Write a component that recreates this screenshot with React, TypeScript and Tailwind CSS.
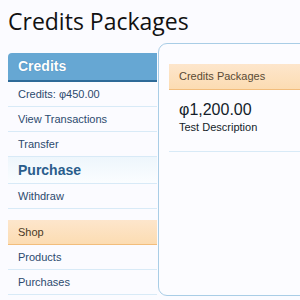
export default function App() {
    const rowCls =
        "h-[25px] flex items-center pl-[10px] border-b border-[#d8eaf7] text-[11px] text-[#2c4a6e]";

    return (
        <div
            className="w-[300px] h-[300px] overflow-hidden bg-[#fbfbff]"
            style={{ fontFamily: '"Liberation Sans", Arial, sans-serif' }}
        >
            <h1
                className="pl-[8px] pt-[6px] h-[43px] text-[23px] leading-[30px] text-[#111]"
                style={{ fontFamily: '"Open Sans", sans-serif' }}
            >
                Credits Packages
            </h1>
            <div className="flex">
                <div className="ml-[8px] mt-[10px] w-[149px] shrink-0">
                    <div className="h-[29px] flex items-center pl-[10px] bg-[#66a7d3] rounded-tl-[4px] border-b-2 border-[#2e6a98] text-[14px] font-bold text-white [text-shadow:0_0_1px_#3d7bab]">
                        Credits
                    </div>
                    <div className={rowCls + " text-[#1e2a38]"}>Credits: φ450.00</div>
                    <div className={rowCls}>View Transactions</div>
                    <div className={rowCls}>Transfer</div>
                    <div className="h-[27px] flex items-center pl-[10px] border-b border-[#d8eaf7] bg-gradient-to-b from-[#eef6fc] to-[#fbfdff] text-[14px] font-bold text-[#2a5d8c]">
                        Purchase
                    </div>
                    <div className={rowCls}>Withdraw</div>
                    <div className="h-[11px]" />
                    <div className="h-[25px] flex items-center pl-[10px] bg-gradient-to-b from-[#fde6cc] to-[#fcdcb2] border-b border-[#f2bd7c] text-[11px] text-[#4a3a26]">
                        Shop
                    </div>
                    <div className={rowCls}>Products</div>
                    <div className={rowCls}>Purchases</div>
                </div>
                <div className="ml-[1px] w-[200px] h-[253px] shrink-0 border border-[#a9cde6] rounded-[9px] bg-[#fcfcff] pl-[10px] pt-[20px]">
                    <div className="h-[26px] flex items-center pl-[10px] bg-gradient-to-b from-[#fde6cc] to-[#fcdcb2] border-b border-[#f2bd7c] text-[11px] text-[#5a4a34]">
                        Credits Packages
                    </div>
                    <div className="pl-[10px] pt-[10px] h-[62px] border-b border-[#d8eaf7]">
                        <div className="text-[16px] leading-[20px] text-[#141c2a]">φ1,200.00</div>
                        <div className="text-[11px] leading-[14px] text-[#141c2a]">Test Description</div>
                    </div>
                </div>
            </div>
        </div>
    );
}
